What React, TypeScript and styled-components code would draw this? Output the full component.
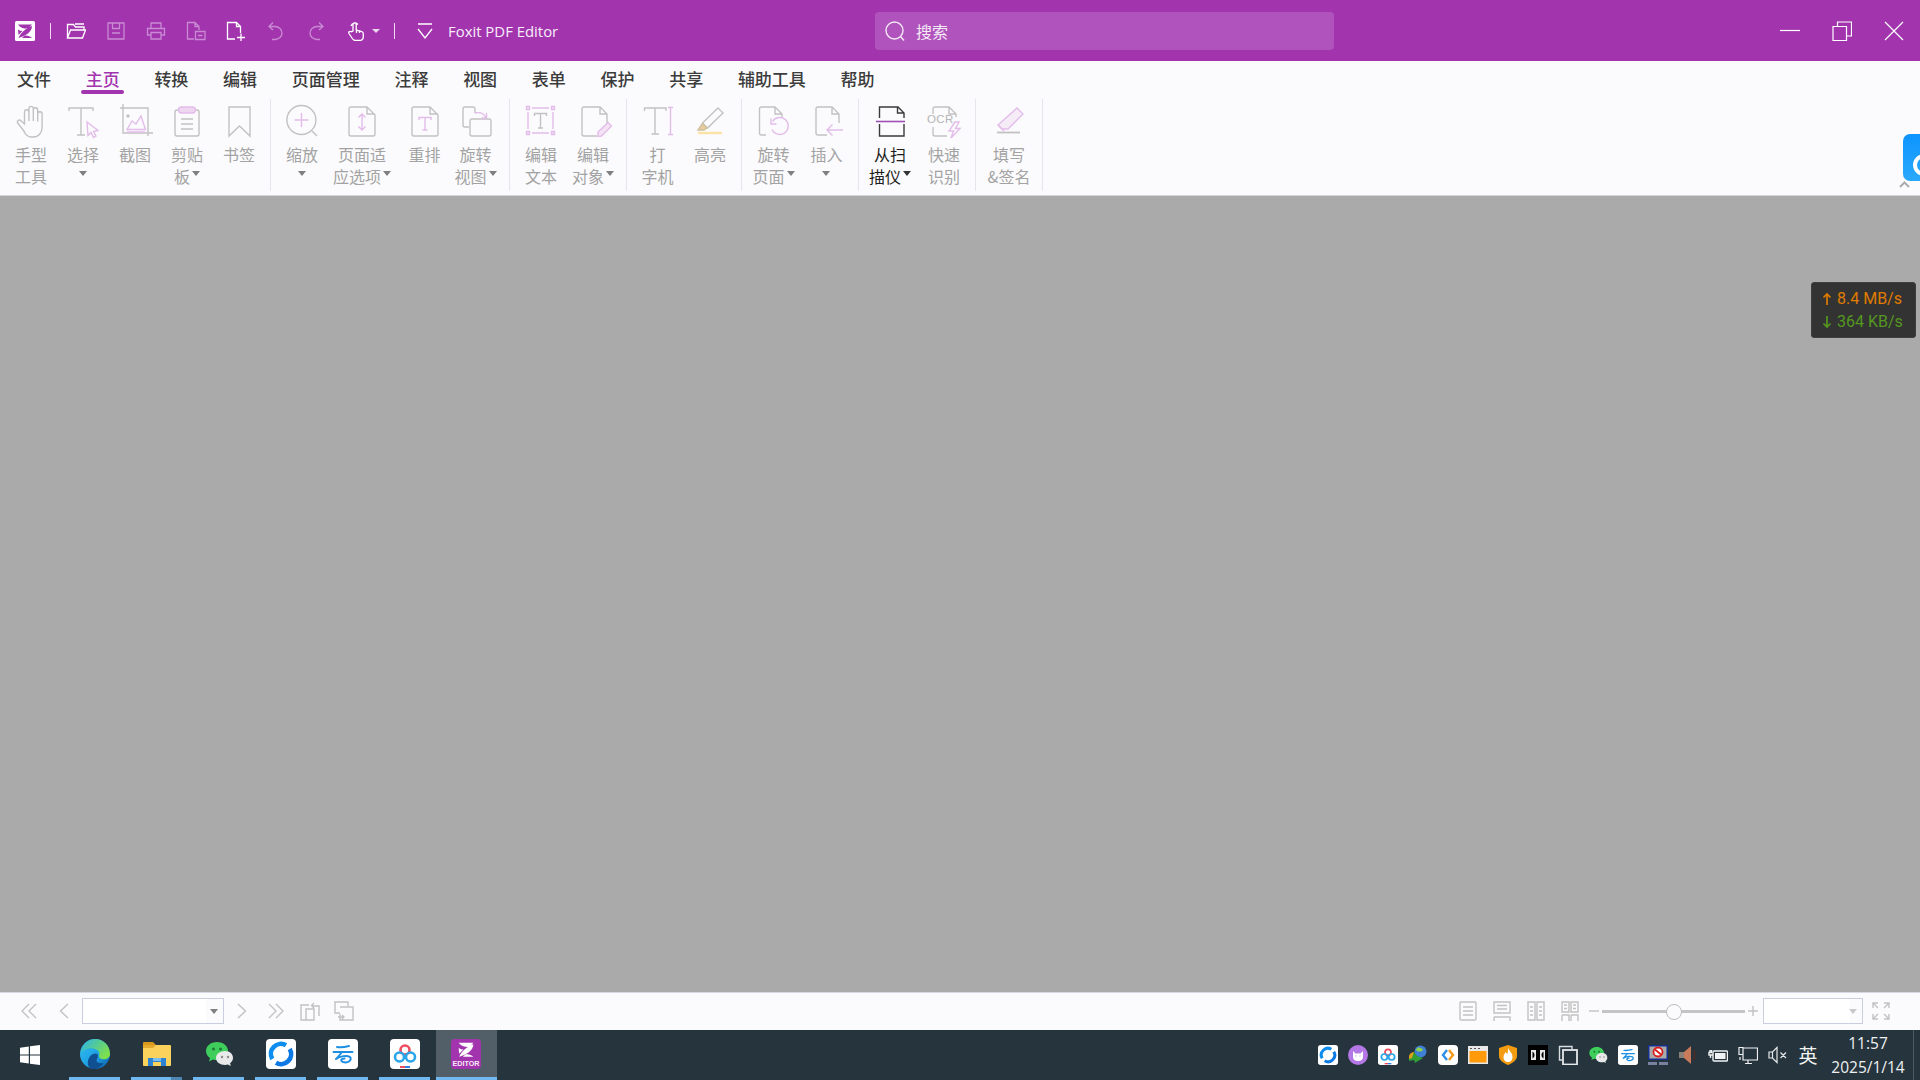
import React from 'react';
import styled, { createGlobalStyle } from 'styled-components';

const PURPLE = '#a235ae';
const G = '#c2c2c2';
const P = '#e3bdea';
const CJK = `"Noto Sans CJK SC", "Noto Sans", sans-serif`;
const LATIN = `"Open Sans", "Noto Sans CJK SC", sans-serif`;

const Global = createGlobalStyle`
  html, body { margin: 0; padding: 0; background: #aaa; }
  * { box-sizing: border-box; }
`;

const Page = styled.div`
  width: 1920px;
  height: 1080px;
  display: flex;
  flex-direction: column;
  overflow: hidden;
  position: relative;
  font-family: ${CJK};
`;

/* ---- title bar ---- */
const TitleBar = styled.div`
  height: 61px;
  flex: none;
  background: ${PURPLE};
  display: flex;
  align-items: center;
`;
const TitleLeft = styled.div`
  width: 875px;
  flex: none;
  display: flex;
  align-items: center;
  padding-left: 15px;
  color: #fff;
`;
const TitleSep = styled.span<{ $ml: number; $mr: number }>`
  width: 1px;
  height: 16px;
  background: #f0dcf3;
  margin: 0 ${(p) => p.$mr}px 0 ${(p) => p.$ml}px;
`;
const QuickRow = styled.div`
  display: flex;
  gap: 20px;
  align-items: center;
`;
const QuickBtn = styled.svg`
  width: 20px;
  height: 20px;
  display: block;
  fill: none;
  stroke-width: 1.3;
`;
const WhiteCaret = styled.span`
  width: 0;
  height: 0;
  margin: 0 14px 0 6px;
  border-left: 4px solid transparent;
  border-right: 4px solid transparent;
  border-top: 4px solid #eed8f1;
`;
const AppName = styled.span`
  font-family: ${LATIN};
  font-size: 14.9px;
  font-weight: 500;
  margin-left: 13px;
  color: #f8eefa;
  white-space: nowrap;
`;
const Search = styled.div`
  width: 459px;
  height: 38px;
  flex: none;
  background: #b053bd;
  border-radius: 4px;
  display: flex;
  align-items: center;
  padding-left: 10px;
  gap: 11px;
  color: #f5e9f7;
  font-size: 16px;
`;
const WinButtons = styled.div`
  margin-left: auto;
  display: flex;
  gap: 32px;
  padding-right: 16px;
  align-items: center;
`;

/* ---- tabs ---- */
const TabRow = styled.div`
  height: 36px;
  flex: none;
  background: #fbfbfd;
  display: flex;
  gap: 34.7px;
  padding-left: 17px;
`;
const Tab = styled.div<{ $active?: boolean }>`
  position: relative;
  font-size: 17px;
  line-height: 36px;
  font-weight: 500;
  color: ${(p) => (p.$active ? PURPLE : '#3c3c3c')};
  white-space: nowrap;
  ${(p) =>
    p.$active &&
    `&::after {
      content: '';
      position: absolute;
      left: -5px;
      right: -4px;
      top: 29px;
      height: 3.5px;
      border-radius: 2px;
      background: ${PURPLE};
    }`}
`;

/* ---- ribbon ---- */
const Ribbon = styled.div`
  height: 99px;
  flex: none;
  background: #fbfbfd;
  border-bottom: 1px solid #d4d4d8;
  display: flex;
  align-items: flex-start;
  padding: 2px 0 0 5px;
  position: relative;
`;
const Group = styled.div<{ $pl?: number; $pr: number }>`
  height: 92px;
  display: flex;
  padding-left: ${(p) => p.$pl ?? 0}px;
  padding-right: ${(p) => p.$pr}px;
  border-right: 1px solid #e5e5ec;
`;
const Item = styled.div<{ $w: number; $on?: boolean }>`
  width: ${(p) => p.$w}px;
  padding-top: 4px;
  display: flex;
  flex-direction: column;
  align-items: center;
  color: ${(p) => (p.$on ? '#1e1e1e' : '#a3a3a3')};
`;
const IconBox = styled.svg`
  width: 36px;
  height: 36px;
  display: block;
  fill: none;
  stroke: ${G};
  stroke-width: 1.4;
  flex: none;
  overflow: visible;
`;
const Labels = styled.div`
  margin-top: 4px;
  font-size: 16px;
  line-height: 22px;
  text-align: center;
  white-space: nowrap;
`;
const Line = styled.div`
  height: 22px;
  display: flex;
  justify-content: center;
  align-items: center;
`;
const Caret = styled.span<{ $on?: boolean; $only?: boolean }>`
  width: 0;
  height: 0;
  margin-left: ${(p) => (p.$only ? 0 : 2)}px;
  margin-top: -6px;
  border-left: 4px solid transparent;
  border-right: 4px solid transparent;
  border-top: 5px solid ${(p) => (p.$on ? '#333' : '#7f7f7f')};
`;
const SideTab = styled.div`
  position: absolute;
  right: 0;
  top: 37px;
  width: 17px;
  height: 47px;
  border-radius: 7px 0 0 7px;
  background: linear-gradient(#0d94ff, #2aa9fb);
  overflow: hidden;
  &::after {
    content: '';
    position: absolute;
    left: 10px;
    top: 20px;
    width: 14px;
    height: 14px;
    border: 4px solid #fff;
    border-radius: 50%;
  }
`;
const Collapse = styled.svg`
  position: absolute;
  right: 10px;
  top: 84px;
  width: 11px;
  height: 7px;
  fill: none;
  stroke: #acacac;
  stroke-width: 2;
`;

/* ---- canvas ---- */
const Canvas = styled.div`
  flex: 1;
  background: #aaa;
  position: relative;
`;
const Speed = styled.div`
  position: absolute;
  left: 1811px;
  top: 86px;
  width: 105px;
  height: 56px;
  background: #333;
  border: 1px solid #3e3e3e;
  border-radius: 3px;
  font-family: Roboto, sans-serif;
  font-size: 16px;
  line-height: 23px;
  padding: 4px 0 0 10px;
  white-space: nowrap;
`;
const SpeedLine = styled.div<{ $c: string }>`
  color: ${(p) => p.$c};
  display: flex;
  align-items: center;
  gap: 5px;
`;
const SpeedArrow = styled.svg`
  width: 10px;
  height: 14px;
  fill: none;
  stroke: currentColor;
  stroke-width: 1.7;
  flex: none;
`;

/* ---- status bar ---- */
const StatusBar = styled.div`
  height: 38px;
  flex: none;
  background: #fbfbfd;
  border-top: 1px solid #d8d8e4;
  display: flex;
  align-items: center;
  padding: 0 0 1px 21px;
`;
const StatusIcon = styled.svg<{ $w: number; $ml: number }>`
  width: ${(p) => p.$w}px;
  height: 20px;
  margin-left: ${(p) => p.$ml}px;
  flex: none;
  fill: none;
  stroke: ${G};
  stroke-width: 1.4;
`;
const Combo = styled.div<{ $w: number; $ml: number; $light?: boolean }>`
  width: ${(p) => p.$w}px;
  height: 26px;
  margin-left: ${(p) => p.$ml}px;
  border: 1px solid #cacede;
  display: flex;
  justify-content: flex-end;
  align-items: center;
  padding-right: 5px;
  background: linear-gradient(90deg, #fff 88%, #fbfbfd 88%);
  &::after {
    content: '';
    border-left: 4px solid transparent;
    border-right: 4px solid transparent;
    border-top: 5px solid ${(p) => (p.$light ? '#c8c8c8' : '#7f7f7f')};
  }
`;
const StatusRight = styled.div`
  margin-left: auto;
  display: flex;
  align-items: center;
  padding-right: 30px;
`;
const Slider = styled.div`
  position: relative;
  width: 143px;
  height: 3px;
  margin-left: 3px;
  background: #c4c4c4;
  &::after {
    content: '';
    position: absolute;
    left: 64px;
    top: -5.5px;
    width: 14px;
    height: 14px;
    border-radius: 50%;
    border: 1.5px solid #bdbdbd;
    background: #fbfbfd;
  }
`;

/* ---- taskbar ---- */
const TaskBar = styled.div`
  height: 50px;
  flex: none;
  background: #25343d;
  display: flex;
  position: relative;
`;
const StartBtn = styled.div`
  width: 63.5px;
  flex: none;
  padding-left: 20px;
  display: flex;
  align-items: center;
`;
const TaskBtn = styled.div<{ $active?: boolean; $multi?: boolean }>`
  position: relative;
  width: ${(p) => (p.$active ? 61 : 62)}px;
  flex: none;
  display: flex;
  justify-content: center;
  align-items: center;
  background: ${(p) => (p.$active ? '#525e68' : 'transparent')};
  &::after {
    content: '';
    position: absolute;
    bottom: 0;
    height: 3px;
    left: ${(p) => (p.$active ? 0 : 5.5)}px;
    right: ${(p) => (p.$active ? 0 : 5.5)}px;
    background: ${(p) =>
      p.$multi
        ? 'linear-gradient(90deg, #70b8f0 79%, #4e86b4 79%)'
        : '#70b8f0'};
  }
`;
const Tile = styled.svg`
  width: 30px;
  height: 30px;
  display: block;
  margin-top: -3px;
`;
const Tray = styled.div`
  margin-left: auto;
  display: flex;
  align-items: center;
  gap: 10px;
  padding-right: 7px;
`;
const TrayIcon = styled.svg`
  width: 20px;
  height: 20px;
  display: block;
  flex: none;
`;
const ImeText = styled.span`
  color: #f2f4f5;
  font-size: 19px;
  width: 20px;
  text-align: center;
  line-height: 20px;
`;
const Clock = styled.div`
  width: 78px;
  margin-left: 1px;
  margin-right: 6px;
  text-align: center;
  color: #eef1f2;
  font-family: ${LATIN};
  font-size: 15.5px;
  line-height: 24px;
  white-space: nowrap;
`;
const DesktopLine = styled.div`
  position: absolute;
  right: 6px;
  top: 0;
  bottom: 0;
  width: 1px;
  background: #4c5a62;
`;

const PAGE = 'M7 4H23L31 12V31a2 2 0 0 1-2 2H7a2 2 0 0 1-2-2V6a2 2 0 0 1 2-2zM23 4V11H31';

/* ---- ribbon icons ---- */
const icons: Record<string, React.ReactNode> = {
  hand: (
    <path d="M11 28 L5 20.5c-1.8-2.2 1-4.6 3-2.8L11.5 21V9a2.2 2.2 0 0 1 4.4 0v9V5.6a2.2 2.2 0 0 1 4.4 0V18V7a2.2 2.2 0 0 1 4.4 0v11.5V11a2.2 2.2 0 0 1 4.4 0V24c0 6-3.5 10-9 10h-2c-3.5 0-5.4-2-7.5-6z" />
  ),
  select: (
    <>
      <path d="M4 8V5H28V8M16 5V32M12 32H20" />
      <path d="M22 19L33 27.5 28.5 28.5 31 33 28.5 34.5 26 29.5 23 32.5Z" stroke={P} />
    </>
  ),
  shot: (
    <>
      <path d="M3 5H31V33M6 1V30H36" />
      <path d="M10 26.5L15 18 19 21 24 13 28.5 26.5ZM10 29H28" stroke={P} />
      <circle cx="11" cy="13" r="1" fill={G} />
    </>
  ),
  clip: (
    <>
      <path d="M10 7H8a2 2 0 0 0-2 2V31a2 2 0 0 0 2 2H28a2 2 0 0 0 2-2V9a2 2 0 0 0-2-2H26" />
      <rect x="9.5" y="4" width="17" height="6" rx="3" fill="#eed6f1" stroke={P} />
      <path d="M12 16H24M12 21H24M12 26H24" />
    </>
  ),
  mark: <path d="M8 4H29V33L18.5 23 8 33Z" />,
  zoom: (
    <>
      <circle cx="17.4" cy="17" r="14.5" />
      <path d="M28 28L33 33" />
      <path d="M10.5 17H24.5M17.5 10V24" stroke={P} />
    </>
  ),
  fit: (
    <>
      <path d={PAGE} />
      <path d="M18 11V27M14.5 14.5L18 11 21.5 14.5M14.5 23.5L18 27 21.5 23.5" stroke={P} />
    </>
  ),
  reflow: (
    <>
      <path d={PAGE} />
      <path d="M12 17V14.5H24V17M18 14.5V27M15.5 27H20.5" stroke={P} />
    </>
  ),
  rotView: (
    <>
      <path d="M11 24H7a2 2 0 0 1-2-2V6a2 2 0 0 1 2-2H15a2 2 0 0 1 2 2V10" />
      <rect x="12" y="16" width="21" height="17" rx="2" />
      <path d="M17 10c5-1 9 0 11 5M28.5 10V15H23.5" stroke={P} />
    </>
  ),
  editText: (
    <>
      <path d="M5 9V26M30 9V26M9 5H26M9 30H26" stroke={P} />
      <path d="M3.5 3.5H6.5V6.5H3.5ZM28.5 3.5H31.5V6.5H28.5ZM3.5 28.5H6.5V31.5H3.5ZM28.5 28.5H31.5V31.5H28.5Z" stroke={P} fill="#f3e3f5" />
      <path d="M11.5 13V10.5H23.5V13M17.5 10.5V25M15 25H20" />
    </>
  ),
  editObj: (
    <>
      <path d="M22 33H9a2 2 0 0 1-2-2V6a2 2 0 0 1 2-2H25L32 11V20M25 4V11H32" />
      <path d="M23 29L33 19.5 36.5 23 26.5 33 23 33.5Z" stroke={P} fill="#f3e3f5" />
    </>
  ),
  type: (
    <>
      <path d="M4.5 8V5H26V8M15 5V31M11.5 31H19" />
      <path d="M28 4.5H33M30.5 4.5V31.5M28 31.5H33" stroke={P} />
    </>
  ),
  marker: (
    <>
      <path d="M26 5L31 10 15.5 25 10.5 25.5 10.5 20Z" />
      <path d="M10.5 20L15.5 25" />
      <path d="M10.5 20.5L6 27H12L15 25Z" stroke="#d0c0a0" fill="#e6cc9c" />
      <path d="M6 30H30" stroke="#fde2a6" strokeWidth="2.4" />
    </>
  ),
  rotPage: (
    <>
      <path d="M10 32H5.5a2 2 0 0 1-2-2V6a2 2 0 0 1 2-2H19L26 11V14M19 4V11H26" />
      <path d="M16.5 18.5a8.5 8.5 0 1 1-.5 8M15 15.5V21H20.5" stroke={P} />
    </>
  ),
  insert: (
    <>
      <path d="M18 32H9a2 2 0 0 1-2-2V6a2 2 0 0 1 2-2H23L30 11V20M23 4V11H30" />
      <path d="M34 27H18M23.5 21.5L18 27 23.5 32.5" stroke={P} />
    </>
  ),
  scan: (
    <>
      <path d="M7.5 15V4H26L32 10V15M25.5 4V10H32M7.5 21V33H32V21" stroke="#3a3a3a" />
      <path d="M4 18.5H33" stroke="#a04fb4" strokeWidth="1.6" />
    </>
  ),
  ocr: (
    <>
      <path d="M7 11V6a2 2 0 0 1 2-2H23L30 11V14M23 4V11H30M7 24V31a2 2 0 0 0 2 2H21" />
      <text x="1" y="19.5" fontFamily="Liberation Sans, sans-serif" fontSize="11.5" fill="#b4b4b4" stroke="none" letterSpacing="0.4">OCR</text>
      <path d="M29 19L23 28H27.5L25 35 34 25.5H29.5L33 19Z" stroke={P} />
    </>
  ),
  sign: (
    <>
      <path d="M26 5L32 11 17 26 11 26 7 22Z" stroke={P} fill="#f5ecf7" />
      <path d="M7 22L13 28" stroke={P} />
      <path d="M6 29.5H29" strokeWidth="1.8" />
    </>
  ),
};

type Tool = { k: string; w: number; l: string[]; caret?: 'inline' | 'below'; on?: boolean };
type Grp = { pl?: number; pr: number; tools: Tool[] };

const groups: Grp[] = [
  {
    pr: 5,
    tools: [
      { k: 'hand', w: 52, l: ['手型', '工具'] },
      { k: 'select', w: 52, l: ['选择'], caret: 'below' },
      { k: 'shot', w: 52, l: ['截图'] },
      { k: 'clip', w: 52, l: ['剪贴', '板'], caret: 'inline' },
      { k: 'mark', w: 52, l: ['书签'] },
    ],
  },
  {
    pl: 5,
    pr: 11,
    tools: [
      { k: 'zoom', w: 52, l: ['缩放'], caret: 'below' },
      { k: 'fit', w: 68, l: ['页面适', '应选项'], caret: 'inline' },
      { k: 'reflow', w: 57, l: ['重排'] },
      { k: 'rotView', w: 45, l: ['旋转', '视图'], caret: 'inline' },
    ],
  },
  {
    pr: 12,
    tools: [
      { k: 'editText', w: 62, l: ['编辑', '文本'] },
      { k: 'editObj', w: 42, l: ['编辑', '对象'], caret: 'inline' },
    ],
  },
  {
    pr: 9,
    tools: [
      { k: 'type', w: 61, l: ['打', '字机'] },
      { k: 'marker', w: 44, l: ['高亮'] },
    ],
  },
  {
    pr: 10,
    tools: [
      { k: 'rotPage', w: 63, l: ['旋转', '页面'], caret: 'inline' },
      { k: 'insert', w: 43, l: ['插入'], caret: 'below' },
    ],
  },
  {
    pr: 8,
    tools: [
      { k: 'scan', w: 62, l: ['从扫', '描仪'], caret: 'inline', on: true },
      { k: 'ocr', w: 46, l: ['快速', '识别'] },
    ],
  },
  { pr: 0, tools: [{ k: 'sign', w: 66, l: ['填写', '&签名'] }] },
];

const tabs = ['文件', '主页', '转换', '编辑', '页面管理', '注释', '视图', '表单', '保护', '共享', '辅助工具', '帮助'];

function ToolItem({ t }: { t: Tool }) {
  return (
    <Item $w={t.w} $on={t.on}>
      <IconBox viewBox="0 0 36 36">{icons[t.k]}</IconBox>
      <Labels>
        {t.l.map((s, i) => (
          <Line key={s}>
            {s}
            {t.caret === 'inline' && i === t.l.length - 1 && <Caret $on={t.on} />}
          </Line>
        ))}
        {t.caret === 'below' && (
          <Line>
            <Caret $only />
          </Line>
        )}
      </Labels>
    </Item>
  );
}

const FoxitMark = ({ fill }: { fill: string }) => (
  <>
    <path d="M3 3.5H17L13.5 7.5C9.5 8 5.5 7 3 3.5Z" fill={fill} />
    <path d="M17 5C17 10.5 11.5 14.5 3.5 17 5.5 12 10.5 7.5 17 5Z" fill={fill} />
    <path d="M3 8.5C4.5 9.5 6 10 7.5 10L3.5 14Z" fill={fill} />
    <path d="M9.5 14.5C12 14.5 15 15 17 17H7Z" fill={fill} />
  </>
);

function TitleContent() {
  const dim = '#c98ad3';
  return (
    <TitleLeft>
      <svg width="20" height="20" viewBox="0 0 20 20">
        <rect width="20" height="20" rx="1.5" fill="#fff" />
        <FoxitMark fill={PURPLE} />
      </svg>
      <TitleSep $ml={15} $mr={15} />
      <QuickRow>
        <QuickBtn viewBox="0 0 20 20" stroke="#fff">
          <path d="M1.5 17V3.5h6L9.5 6H18V9M1.5 17L4.5 9H19.5L16.5 17ZM9 3H18" />
        </QuickBtn>
        <QuickBtn viewBox="0 0 20 20" stroke={dim}>
          <path d="M2 2H18V18H2ZM6.5 2V7.5H13.5V2M6 12H14" />
        </QuickBtn>
        <QuickBtn viewBox="0 0 20 20" stroke={dim}>
          <path d="M5 7V2H15V7M5 14H1.5V7.5H18.5V14H15M5 11.5H15V18H5Z" />
        </QuickBtn>
        <QuickBtn viewBox="0 0 20 20" stroke={dim}>
          <path d="M8 18H1.5V1.5H9L13 5.5V9M9 1.5V5.5H13M9.5 10.5H19V18.5H9.5ZM12 14.5H16.5" />
        </QuickBtn>
        <QuickBtn viewBox="0 0 20 20" stroke="#fff">
          <path d="M9 18H1.5V1.5H10.5L14.5 5.5V12M10.5 1.5V5.5H14.5M11 16.5H19M15 12.5V20" />
        </QuickBtn>
        <QuickBtn viewBox="0 0 20 20" stroke={dim}>
          <path d="M7 1.5L3 5.5 7 9M3 5.5H9a7 6.5 0 0 1 0 13H6" />
        </QuickBtn>
        <QuickBtn viewBox="0 0 20 20" stroke={dim}>
          <path d="M13 1.5L17 5.5 13 9M17 5.5H11a7 6.5 0 0 0 0 13H14" />
        </QuickBtn>
        <QuickBtn viewBox="0 0 20 20" stroke="#fff">
          <path d="M7 10V3.5a1.6 1.6 0 0 1 3.2 0V9l5.5 1.5c1.3.4 1.6 1.2 1.6 2.5v2.5c0 2.5-1.8 4-4 4H9.5c-1.5 0-2.5-1-3.2-2L3 12.5c-1-1.6 1-2.8 2.2-1.7ZM5 5A4 4 0 0 1 12 3.5M10.5 9V12M13.5 10V12" />
        </QuickBtn>
      </QuickRow>
      <WhiteCaret />
      <TitleSep $ml={0} $mr={20} />
      <QuickBtn viewBox="0 0 20 20" stroke="#fff">
        <path d="M3 3H17M3 8L10 17 17 8" />
      </QuickBtn>
      <AppName>Foxit PDF Editor</AppName>
    </TitleLeft>
  );
}

function Start() {
  return (
    <svg width="20" height="20" viewBox="0 0 20 20" fill="#fff">
      <path d="M0 2.8L8.8 1.5V9.5H0ZM10 1.3L20 0V9.5H10ZM0 10.5H8.8V18.5L0 17.2ZM10 10.5H20V20L10 18.7Z" />
    </svg>
  );
}

const SyncTile = () => (
  <>
    <rect width="30" height="30" rx="4" fill="#fff" />
    <path d="M6.3 20A10 10 0 0 1 20 6.3" fill="none" stroke="#0d8dee" strokeWidth="4.6" />
    <path d="M23.7 10A10 10 0 0 1 10 23.7" fill="none" stroke="#0d79e4" strokeWidth="4.6" />
  </>
);
const CloudTile = () => (
  <>
    <rect width="30" height="30" rx="4" fill="#fff" />
    <path
      d="M9 8C12.5 8.5 17 8 21 7M5.5 13H24.5M14 13C12 15.5 10 18 8 20C12 17 19 16 22 18C24.5 21 20 24.5 15 23C12 22 13 19.5 16.5 19.5"
      fill="none"
      stroke="#1d8fe3"
      strokeWidth="2"
      strokeLinecap="round"
      strokeLinejoin="round"
    />
  </>
);
const BaiduTile = () => (
  <>
    <rect width="30" height="30" rx="4" fill="#fff" />
    <circle cx="15" cy="11" r="4.5" fill="none" stroke="#ee4d5f" strokeWidth="2.6" />
    <circle cx="9.5" cy="18" r="4.5" fill="none" stroke="#2aa5ea" strokeWidth="2.6" />
    <circle cx="20.5" cy="18" r="4.5" fill="none" stroke="#2aa5ea" strokeWidth="2.6" />
    <rect x="10" y="27" width="5" height="2" fill="#ee4d5f" />
    <rect x="15" y="27" width="5" height="2" fill="#2f7fe0" />
  </>
);
const ChatBubbles = () => (
  <>
    <path d="M13 3C6.5 3 2 7 2 12c0 3 1.7 5.4 4 7l-1 3.5 4-2c1.2.4 2.5.5 4 .5 6.5 0 11-4 11-9S19.5 3 13 3Z" fill="#3fce5c" />
    <circle cx="9.5" cy="10" r="1.5" fill="#1b7a33" />
    <circle cx="16.5" cy="10" r="1.5" fill="#1b7a33" />
    <path d="M21 12c-5 0-9 3-9 7s4 7 9 7c1 0 2-.1 2.8-.4l3 1.4-.7-2.8c1.8-1.3 2.9-3.2 2.9-5.2 0-4-3-7-8-7Z" fill="#e9e9e9" />
    <circle cx="18" cy="18" r="1.2" fill="#8a8a8a" />
    <circle cx="24" cy="18" r="1.2" fill="#8a8a8a" />
  </>
);

export default function App() {
  return (
    <Page>
      <Global />
      <TitleBar>
        <TitleContent />
        <Search>
          <svg width="20" height="20" viewBox="0 0 20 20" fill="none" stroke="#f5e9f7" strokeWidth="1.4">
            <circle cx="9.5" cy="9.5" r="8.5" />
            <path d="M15.5 15.5L19 19.5" />
          </svg>
          搜索
        </Search>
        <WinButtons>
          <svg width="20" height="20" viewBox="0 0 20 20" fill="none" stroke="#fff" strokeWidth="1.2">
            <path d="M0 9.5H20" />
          </svg>
          <svg width="20" height="20" viewBox="0 0 20 20" fill="none" stroke="#fff" strokeWidth="1.2">
            <path d="M1 5.5H14.5V19.5H1ZM5.5 5.5V1H19.5V15H14.5" />
          </svg>
          <svg width="20" height="20" viewBox="0 0 20 20" fill="none" stroke="#fff" strokeWidth="1.2">
            <path d="M1 1L19 19M19 1L1 19" />
          </svg>
        </WinButtons>
      </TitleBar>

      <TabRow>
        {tabs.map((t) => (
          <Tab key={t} $active={t === '主页'}>
            {t}
          </Tab>
        ))}
      </TabRow>

      <Ribbon>
        {groups.map((g, i) => (
          <Group key={i} $pl={g.pl} $pr={g.pr}>
            {g.tools.map((t) => (
              <ToolItem key={t.k} t={t} />
            ))}
          </Group>
        ))}
        <SideTab />
        <Collapse viewBox="0 0 11 7">
          <path d="M1 6L5.5 1.5 10 6" />
        </Collapse>
      </Ribbon>

      <Canvas>
        <Speed>
          <SpeedLine $c="#e07c00">
            <SpeedArrow viewBox="0 0 10 14">
              <path d="M5 13V2M1.5 5.5L5 2 8.5 5.5" />
            </SpeedArrow>
            8.4 MB/s
          </SpeedLine>
          <SpeedLine $c="#54981f">
            <SpeedArrow viewBox="0 0 10 14">
              <path d="M5 1V12M1.5 8.5L5 12 8.5 8.5" />
            </SpeedArrow>
            364 KB/s
          </SpeedLine>
        </Speed>
      </Canvas>

      <StatusBar>
        <StatusIcon $w={16} $ml={0} viewBox="0 0 16 20">
          <path d="M8 3L1 10 8 17M15 3L8 10 15 17" />
        </StatusIcon>
        <StatusIcon $w={10} $ml={22} viewBox="0 0 10 20">
          <path d="M9 3L1.5 10 9 17" />
        </StatusIcon>
        <Combo $w={142} $ml={13} />
        <StatusIcon $w={10} $ml={13} viewBox="0 0 10 20">
          <path d="M1 3L8.5 10 1 17" />
        </StatusIcon>
        <StatusIcon $w={16} $ml={21} viewBox="0 0 16 20">
          <path d="M1 3L8 10 1 17M8 3L15 10 8 17" />
        </StatusIcon>
        <StatusIcon $w={20} $ml={16} viewBox="0 0 20 20">
          <path d="M9 4H1V19H14V8H6V19M19 15V5H12M14 2L11.5 4.5 14 7" />
        </StatusIcon>
        <StatusIcon $w={20} $ml={14} viewBox="0 0 20 20">
          <path d="M14 5V1H1V12H6M6 6H19V19H6V13M4 16H10M8 14L10 16 8 18" />
        </StatusIcon>
        <StatusRight>
          <StatusIcon $w={18} $ml={0} viewBox="0 0 18 20">
            <path d="M1 2a1 1 0 0 1 1-1H16a1 1 0 0 1 1 1V18a1 1 0 0 1-1 1H2a1 1 0 0 1-1-1ZM4 6H14M4 10H14M4 14H14" />
          </StatusIcon>
          <StatusIcon $w={18} $ml={16} viewBox="0 0 18 20">
            <path d="M1 1H17V12H1ZM1 16H17V20M1 20V16M4 4.5H14M4 8H14" />
          </StatusIcon>
          <StatusIcon $w={18} $ml={16} viewBox="0 0 18 20">
            <path d="M1 1H8V19H1ZM10 1H17V19H10ZM3 6H6M3 10H6M3 14H6M12 6H15M12 10H15M12 14H15" />
          </StatusIcon>
          <StatusIcon $w={18} $ml={16} viewBox="0 0 18 20">
            <path d="M1 1H8V11H1ZM10 1H17V11H10ZM1 14H8V20M1 20V14M10 14H17V20M10 20V14M3 4H6M3 7.5H6M12 4H15M12 7.5H15" />
          </StatusIcon>
          <StatusIcon $w={10} $ml={10} viewBox="0 0 10 20" strokeWidth={2}>
            <path d="M0 10H10" />
          </StatusIcon>
          <Slider />
          <StatusIcon $w={10} $ml={3} viewBox="0 0 10 20" strokeWidth={1.6}>
            <path d="M0 10H10M5 5V15" />
          </StatusIcon>
          <Combo $w={100} $ml={5} $light />
          <StatusIcon $w={18} $ml={9} viewBox="0 0 18 20">
            <path d="M1 7V2H6M1 2L6 7M12 2H17V7M17 2L12 7M1 13V18H6M1 18L6 13M12 18H17V13M17 18L12 13" />
          </StatusIcon>
        </StatusRight>
      </StatusBar>

      <TaskBar>
        <StartBtn>
          <Start />
        </StartBtn>
        <TaskBtn>
          <Tile viewBox="0 0 30 30">
            <defs>
              <linearGradient id="edgeA" x1="0" y1="0" x2="1" y2="1">
                <stop offset="0" stopColor="#35c1f1" />
                <stop offset="0.6" stopColor="#1b9de2" />
                <stop offset="1" stopColor="#0c59a4" />
              </linearGradient>
              <linearGradient id="edgeB" x1="0" y1="0" x2="1" y2="0.6">
                <stop offset="0" stopColor="#2bb3e8" />
                <stop offset="1" stopColor="#7ee04a" />
              </linearGradient>
            </defs>
            <circle cx="15" cy="15" r="15" fill="url(#edgeA)" />
            <path d="M1 14C2 5 9 0 15 0 24 0 30 7 30 15 30 19 26 21 22 20 17 19 20 15 19 13 16 8 5 8 1 14Z" fill="url(#edgeB)" />
            <path d="M11 30C6 27 7 18 13 15 18 13 19 17 17 20 15 23 19 25 24 24 21 28 16 31 11 30Z" fill="#0f4f92" />
          </Tile>
        </TaskBtn>
        <TaskBtn $multi>
          <Tile viewBox="0 0 30 30">
            <path d="M1 4a1 1 0 0 1 1-1H11L14 6H1Z" fill="#d99a1c" />
            <path d="M1 6H28a1 1 0 0 1 1 1V26a1 1 0 0 1-1 1H2a1 1 0 0 1-1-1Z" fill="#fbd35c" />
            <path d="M1 6H14L11 9H1Z" fill="#e5ab2e" />
            <path d="M6 27V19H24V27H19V23H11V27Z" fill="#2c83d4" />
            <rect x="11" y="19" width="8" height="3" fill="#7cc0f2" />
          </Tile>
        </TaskBtn>
        <TaskBtn>
          <Tile viewBox="0 0 30 30">
            <ChatBubbles />
          </Tile>
        </TaskBtn>
        <TaskBtn>
          <Tile viewBox="0 0 30 30">
            <SyncTile />
          </Tile>
        </TaskBtn>
        <TaskBtn>
          <Tile viewBox="0 0 30 30">
            <CloudTile />
          </Tile>
        </TaskBtn>
        <TaskBtn>
          <Tile viewBox="0 0 30 30">
            <BaiduTile />
          </Tile>
        </TaskBtn>
        <TaskBtn $active>
          <Tile viewBox="0 0 30 30">
            <rect width="30" height="30" rx="4" fill={PURPLE} />
            <g transform="translate(4.5 0) scale(1.05)">
              <FoxitMark fill="#fff" />
            </g>
            <text x="15" y="27" textAnchor="middle" fontFamily="Liberation Sans, sans-serif" fontSize="7.2" fontWeight="700" fill="#f6e9f8">EDITOR</text>
          </Tile>
        </TaskBtn>

        <Tray>
          <TrayIcon viewBox="0 0 30 30">
            <SyncTile />
          </TrayIcon>
          <TrayIcon viewBox="0 0 20 20">
            <ellipse cx="10" cy="10" rx="10" ry="10" fill="#b378e6" />
            <path d="M5 6L7.5 8.5H12.5L15 6V12C15 14.5 13 16 10 16S5 14.5 5 12Z" fill="#fff" />
            <path d="M7.5 11H8.5M11.5 11H12.5" stroke="#b378e6" />
          </TrayIcon>
          <TrayIcon viewBox="0 0 30 30">
            <BaiduTile />
          </TrayIcon>
          <TrayIcon viewBox="0 0 20 20">
            <circle cx="12.5" cy="6.5" r="6" fill="#3f7fd4" />
            <path d="M9 3C11 2 14 3 15 5 13 7 10 7 8 5Z" fill="#8ed04e" />
            <path d="M1 13C2 9 5 7 7 8L9 11 15 13 7 18 6 15 1 16Z" fill="#2e9e35" />
            <path d="M1 11C2 8 4 7 6 7L4 13 1 14Z" fill="#d9a21c" />
          </TrayIcon>
          <TrayIcon viewBox="0 0 20 20">
            <rect width="20" height="20" rx="4" fill="#fff" />
            <path d="M9 5L5 10 9 15" fill="none" stroke="#2f8fe8" strokeWidth="2.4" />
            <path d="M11 5L15 10 11 15" fill="none" stroke="#f39a1e" strokeWidth="2.4" />
          </TrayIcon>
          <TrayIcon viewBox="0 0 20 20">
            <rect width="20" height="18" y="1" fill="#e8e8e8" />
            <rect x="1.5" y="6" width="17" height="11.5" fill="#ff9a0a" />
            <path d="M2 3.5H4M6 3.5H8M10 3.5H12" stroke="#555" />
          </TrayIcon>
          <TrayIcon viewBox="0 0 20 20">
            <path d="M10 0L19 3V11C19 15 15 18 10 20 5 18 1 15 1 11V3Z" fill="#f39c12" />
            <path d="M10 3C12 7 14.5 8 14.5 12 14.5 15 12.5 17 10 17S5.5 15 5.5 12C5.5 9.5 7 9 7.5 7 8.5 8 9 8.5 9.5 9 10 7 10 5 10 3Z" fill="#fff" />
          </TrayIcon>
          <TrayIcon viewBox="0 0 20 20">
            <rect width="20" height="20" fill="#000" />
            <path d="M3 5H8V15H3ZM12 5H17V15H12Z" fill="#e8e8e8" />
            <path d="M4.5 6.5 A4 4 0 0 1 4.5 13.5ZM15.5 6.5A4 4 0 0 0 15.5 13.5Z" fill="#000" />
          </TrayIcon>
          <TrayIcon viewBox="0 0 20 20" fill="none" stroke="#d8dcdf" strokeWidth="1.4">
            <path d="M4 15H1.5V1.5H14V4" />
            <rect x="5" y="5" width="14" height="14.5" stroke="#e6e8ea" strokeWidth="1.8" />
          </TrayIcon>
          <TrayIcon viewBox="0 0 30 30">
            <ChatBubbles />
          </TrayIcon>
          <TrayIcon viewBox="0 0 30 30">
            <CloudTile />
          </TrayIcon>
          <TrayIcon viewBox="0 0 20 20">
            <rect x="0" y="0" width="20" height="15" fill="#16308f" />
            <rect x="1.5" y="1.5" width="17" height="12" fill="#a9a9a9" />
            <circle cx="10" cy="7" r="4.5" fill="#fff" stroke="#d81f1f" strokeWidth="1.8" />
            <path d="M7 4.5L13 9.5" stroke="#d81f1f" strokeWidth="1.8" />
            <path d="M0 17H9V20H0ZM11 17H20V20H11Z" fill="#7a80a0" />
          </TrayIcon>
          <TrayIcon viewBox="0 0 20 20">
            <path d="M1 7H6L13 1V19L6 13H1Z" fill="#c87a5a" />
            <path d="M1 7H6V13H1Z" fill="#8a8078" />
            <path d="M15.5 5C17 8 17 12 15.5 15" fill="none" stroke="#5b2a1c" strokeWidth="1.2" />
          </TrayIcon>
          <TrayIcon viewBox="0 0 20 20" fill="none" stroke="#f0f2f3" strokeWidth="1.4">
            <rect x="5" y="6" width="14.5" height="10" rx="1" />
            <rect x="7" y="8" width="10.5" height="6" fill="#f0f2f3" stroke="none" />
            <path d="M5 10H1V7.5H4M2 7.5V5M3.5 7.5V5M2.5 10V13" />
          </TrayIcon>
          <TrayIcon viewBox="0 0 20 20" fill="none" stroke="#f0f2f3" strokeWidth="1.2">
            <path d="M5 3H19.5V15H5V10M10 15V18.5M7 18.5H14M1 2.5H5V9.5H1ZM2 12V15" />
          </TrayIcon>
          <TrayIcon viewBox="0 0 20 20" fill="none" stroke="#e6e9ea" strokeWidth="1.2">
            <path d="M1 7H4.5L9 2.5V17.5L4.5 13H1ZM4.5 7V13M12.5 7.5L18 13M18 7.5L12.5 13" />
          </TrayIcon>
          <ImeText>英</ImeText>
          <Clock>
            <div>11:57</div>
            <div>2025/1/14</div>
          </Clock>
        </Tray>
        <DesktopLine />
      </TaskBar>
    </Page>
  );
}
